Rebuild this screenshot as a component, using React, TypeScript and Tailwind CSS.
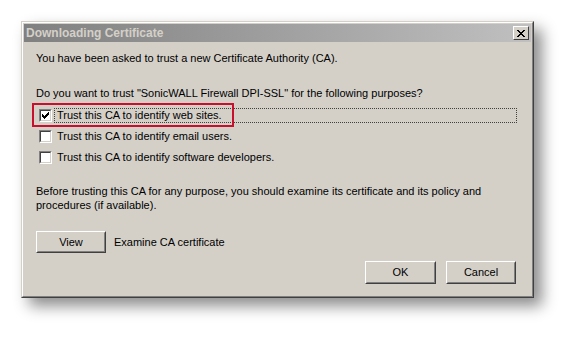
import React from "react";

const font = { fontFamily: "Tahoma, 'Liberation Sans', Arial, sans-serif" };

function Checkbox({ checked }: { checked?: boolean }) {
  return (
    <div className="w-[13px] h-[13px] border border-t-[#808080] border-l-[#808080] border-b-white border-r-white shrink-0">
      <div className="w-full h-full border border-t-[#404040] border-l-[#404040] border-b-[#d4d0c8] border-r-[#d4d0c8] bg-white flex items-center justify-center">
        {checked && (
          <svg width="7" height="7" viewBox="0 0 7 7">
            <path d="M0 2h1v1h1v1h1v-1h1v-1h1v-1h1v-1h1v3h-1v1h-1v1h-1v1h-1v1h-1v-1h-1v-1h-1v-1h-1z" fill="#000" />
          </svg>
        )}
      </div>
    </div>
  );
}

function Button({ label, className = "" }: { label: string; className?: string }) {
  return (
    <div className={`border border-t-white border-l-white border-b-[#404040] border-r-[#404040] ${className}`}>
      <div className="w-full h-full border border-t-[#d4d0c8] border-l-[#d4d0c8] border-b-[#808080] border-r-[#808080] flex items-center justify-center text-[11px] text-black">
        {label}
      </div>
    </div>
  );
}

export default function App() {
  const rows = [
    { label: "Trust this CA to identify web sites.", checked: true },
    { label: "Trust this CA to identify email users." },
    { label: "Trust this CA to identify software developers." },
  ];

  return (
    <div className="w-[576px] h-[341px] bg-white pl-[21px] pt-[21px]" style={font}>
      <div className="relative w-[513px] h-[277px] border border-t-[#d4d0c8] border-l-[#d4d0c8] border-b-[#404040] border-r-[#404040] shadow-[8px_8px_14px_rgba(0,0,0,0.45)]">
        <div className="w-full h-full border border-t-white border-l-white border-b-[#808080] border-r-[#808080] bg-[#d4d0c8] p-[1px] flex flex-col">
          {/* title bar */}
          <div className="h-[18px] bg-gradient-to-r from-[#808080] to-[#c0c0c0] flex items-center justify-between pl-[2px] pr-[2px]">
            <span className="text-[12px] font-bold text-[#d4d0c8] leading-none">Downloading Certificate</span>
            <div className="w-[16px] h-[14px] border border-t-white border-l-white border-b-[#404040] border-r-[#404040] bg-[#d4d0c8] flex items-center justify-center">
              <svg width="8" height="7" viewBox="0 0 8 7">
                <path d="M0 0h2v1h1v1h2v-1h1v-1h2v1h-1v1h-1v1h-1v1h1v1h1v1h1v1h-2v-1h-1v-1h-2v1h-1v1h-2v-1h1v-1h1v-1h1v-1h-1v-1h-1v-1h-1z" fill="#000" />
              </svg>
            </div>
          </div>

          {/* body */}
          <div className="flex-1 flex flex-col pl-[12px] pr-[15px] pt-[10px] text-[11px] leading-[13px] text-black">
            <p>You have been asked to trust a new Certificate Authority (CA).</p>
            <p className="mt-[22px]">Do you want to trust "SonicWALL Firewall DPI-SSL" for the following purposes?</p>

            <div className="mt-[9px] flex flex-col gap-[8px] pl-[3px]">
              {rows.map((r, i) => (
                <div key={i} className="flex items-center h-[13px]">
                  <Checkbox checked={r.checked} />
                  <span
                    className={`ml-[3px] px-[2px] leading-[13px] ${
                      i === 0 ? "flex-1 outline outline-1 outline-dotted outline-[#404040]" : ""
                    }`}
                  >
                    {r.label}
                  </span>
                </div>
              ))}
            </div>

            <p className="mt-[20px] leading-[14px]">
              Before trusting this CA for any purpose, you should examine its certificate and its policy and
              <br />
              procedures (if available).
            </p>

            <div className="mt-[19px] flex items-center">
              <Button label="View" className="w-[70px] h-[22px]" />
              <span className="ml-[8px]">Examine CA certificate</span>
            </div>

            <div className="mt-[8px] flex justify-end gap-[10px]">
              <Button label="OK" className="w-[71px] h-[23px]" />
              <Button label="Cancel" className="w-[70px] h-[23px]" />
            </div>
          </div>
        </div>

        {/* annotation highlight */}
        <div className="absolute left-[10px] top-[81px] w-[202px] h-[24px] border-2 border-[#c8102e]" />
      </div>
    </div>
  );
}
